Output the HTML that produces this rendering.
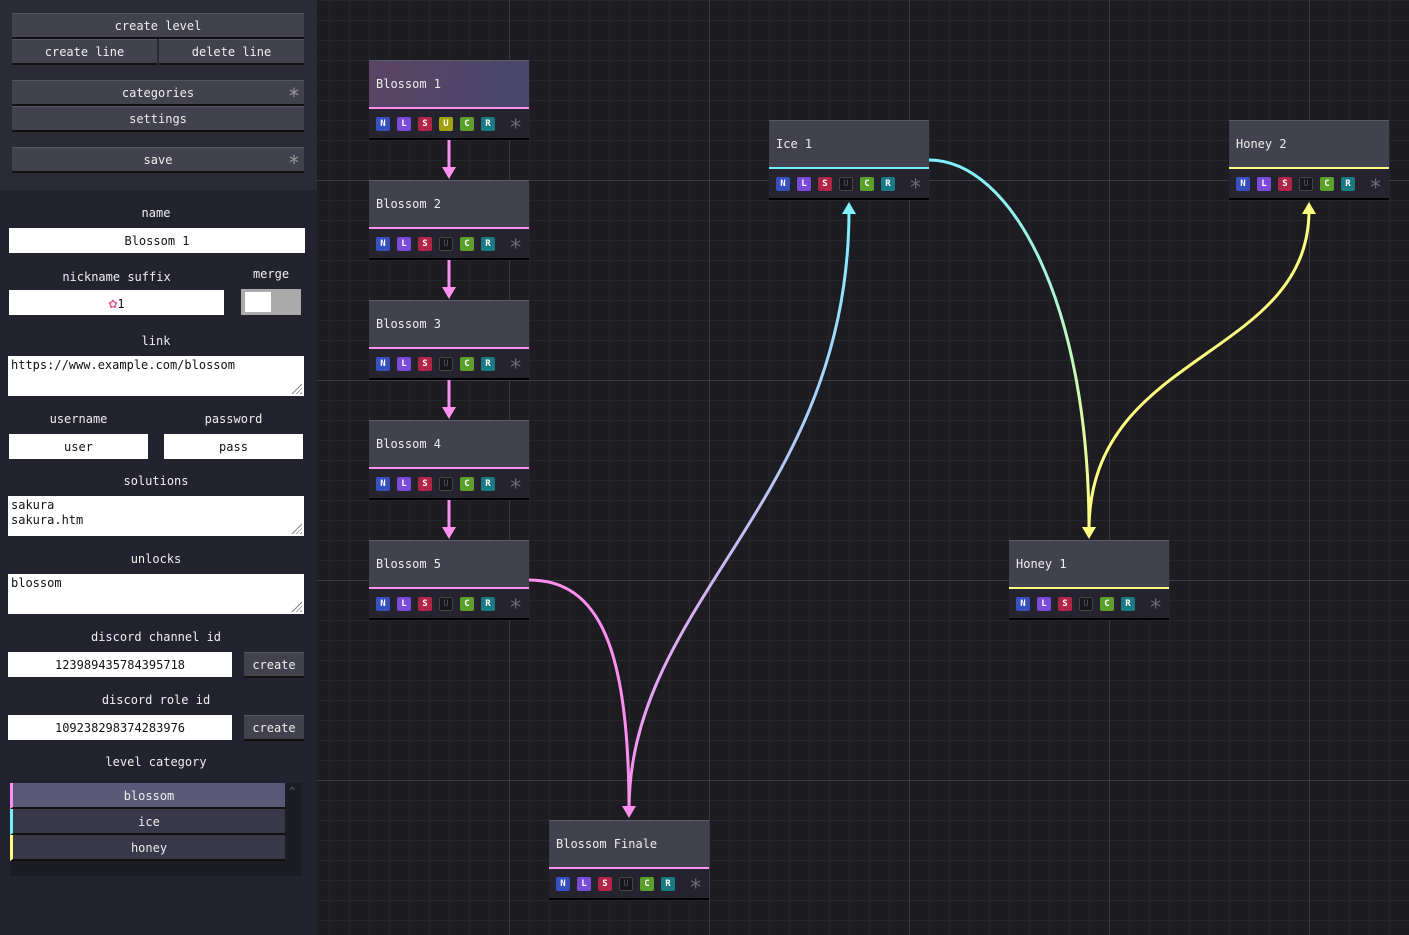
<!DOCTYPE html>
<html><head><meta charset="utf-8"><style>
*{box-sizing:border-box;margin:0;padding:0}
body{width:1409px;height:935px;overflow:hidden;background:#1c1c21;font-family:"DejaVu Sans Mono","Liberation Mono",monospace;font-size:12px;color:#eee;position:relative}
#grid{position:absolute;left:0;top:0;width:1409px;height:935px;
background-image:linear-gradient(90deg,#3a3a42 1px,transparent 1px),linear-gradient(0deg,#3a3a42 1px,transparent 1px),linear-gradient(90deg,#25252b 1px,transparent 1px),linear-gradient(0deg,#25252b 1px,transparent 1px);
background-size:200px 200px,200px 200px,20px 20px,20px 20px;
background-position:109px 0,0 181px,9px 0,0 1px}
#side{position:absolute;left:0;top:0;width:317px;height:935px;background:#232330}
#top{position:absolute;left:0;top:0;width:317px;height:190px;background:#2b2b38}
.btn{position:absolute;background:#42424f;border-top:1px solid #55556a;border-bottom:2px solid #111;color:#eee;text-align:center;font-size:12px;line-height:24px;height:26px}
.ast{position:absolute;right:4px;top:2px;color:#999;font-size:20px;line-height:26px}
.lbl{position:absolute;text-align:center;color:#eee;font-size:12px;margin-top:1px}
.in{position:absolute;background:#fff;color:#111;font-size:12px;text-align:center;line-height:26px;height:25px}
.ta{position:absolute;background:#fff;color:#111;font-size:12px;line-height:15px;padding:2px 3px;height:40px;left:8px;width:296px}
.ta:after{content:"";position:absolute;right:2px;bottom:2px;width:11px;height:11px;background:repeating-linear-gradient(135deg,transparent 0 2px,#888 2px 3px);clip-path:polygon(100% 0,100% 100%,0 100%)}
.cat{position:absolute;left:10px;width:275px;height:26px;background:#383849;border-bottom:2px solid #111;text-align:center;line-height:26px;border-left:3px solid}
.node{position:absolute;width:160px;height:80px}
.hd{height:49px;background:#42424f;border-top:1px solid #5a5a6a;border-bottom:2px solid;padding:16px 7px;font-size:12px;color:#eee}
.ft{height:31px;background:#25242e;border-bottom:2px solid #000;position:relative}
.ft b{position:absolute;top:8px;width:14px;height:14px;font-size:9px;line-height:14px;text-align:center;color:#fff;border-radius:2px;font-weight:bold}
.ft i{position:absolute;left:140px;top:8px;font-style:normal;font-size:22px;color:#6a6a78;line-height:24px}
.n{left:7px;background:#3750c0}.l{left:28px;background:#7a4bd8}.s{left:49px;background:#b02548}.u{left:70px;background:#16151c;border:1px solid #444;color:#555!important;font-weight:normal!important;line-height:12px!important}.uu{left:70px;background:#a0a010}.c{left:91px;background:#5aa02a}.r{left:112px;background:#1a7a84}
</style></head><body>
<div id="grid"></div>
<svg width="1409" height="935" style="position:absolute;left:0;top:0">
<defs>
<linearGradient id="g1" x1="0" y1="1" x2="0" y2="0"><stop offset="0" stop-color="#ff90f0"/><stop offset="1" stop-color="#80f0ff"/></linearGradient>
<linearGradient id="g2" x1="0" y1="0" x2="0" y2="1"><stop offset="0" stop-color="#80f0ff"/><stop offset="1" stop-color="#ffff80"/></linearGradient>
</defs>
<g fill="none" stroke-width="3">
<path d="M449 140V170M449 260V290M449 380V410M449 500V530" stroke="#ff90f0"/>
<path d="M529 580C600 580 629 650 629 810" stroke="#ff90f0"/>
<path d="M629 810C629 600 849 500 849 210" stroke="url(#g1)"/>
<path d="M929 160C1010 160 1089 300 1089 530" stroke="url(#g2)"/>
<path d="M1089 530C1089 350 1309 360 1309 210" stroke="#ffff80"/>
</g>
<g fill="#ff90f0"><path d="M442 167h14l-7 12z"/><path d="M442 287h14l-7 12z"/><path d="M442 407h14l-7 12z"/><path d="M442 527h14l-7 12z"/><path d="M622 806h14l-7 12z"/></g>
<path d="M842 214h14l-7-12z" fill="#80f0ff"/>
<path d="M1082 527h14l-7 12z" fill="#ffff80"/>
<path d="M1302 214h14l-7-12z" fill="#ffff80"/>
</svg>

<div class="node" style="left:369px;top:60px"><div class="hd" style="border-bottom-color:#ff90f0;background:linear-gradient(100deg,#5a4465,#47466a)">Blossom 1</div><div class="ft"><b class="n">N</b><b class="l">L</b><b class="s">S</b><b class="uu">U</b><b class="c">C</b><b class="r">R</b><i>*</i></div></div>
<div class="node" style="left:369px;top:180px"><div class="hd" style="border-bottom-color:#ff90f0">Blossom 2</div><div class="ft"><b class="n">N</b><b class="l">L</b><b class="s">S</b><b class="u">U</b><b class="c">C</b><b class="r">R</b><i>*</i></div></div>
<div class="node" style="left:369px;top:300px"><div class="hd" style="border-bottom-color:#ff90f0">Blossom 3</div><div class="ft"><b class="n">N</b><b class="l">L</b><b class="s">S</b><b class="u">U</b><b class="c">C</b><b class="r">R</b><i>*</i></div></div>
<div class="node" style="left:369px;top:420px"><div class="hd" style="border-bottom-color:#ff90f0">Blossom 4</div><div class="ft"><b class="n">N</b><b class="l">L</b><b class="s">S</b><b class="u">U</b><b class="c">C</b><b class="r">R</b><i>*</i></div></div>
<div class="node" style="left:369px;top:540px"><div class="hd" style="border-bottom-color:#ff90f0">Blossom 5</div><div class="ft"><b class="n">N</b><b class="l">L</b><b class="s">S</b><b class="u">U</b><b class="c">C</b><b class="r">R</b><i>*</i></div></div>
<div class="node" style="left:549px;top:820px"><div class="hd" style="border-bottom-color:#ff90f0">Blossom Finale</div><div class="ft"><b class="n">N</b><b class="l">L</b><b class="s">S</b><b class="u">U</b><b class="c">C</b><b class="r">R</b><i>*</i></div></div>
<div class="node" style="left:769px;top:120px"><div class="hd" style="border-bottom-color:#70f0ff">Ice 1</div><div class="ft"><b class="n">N</b><b class="l">L</b><b class="s">S</b><b class="u">U</b><b class="c">C</b><b class="r">R</b><i>*</i></div></div>
<div class="node" style="left:1229px;top:120px"><div class="hd" style="border-bottom-color:#ffff80">Honey 2</div><div class="ft"><b class="n">N</b><b class="l">L</b><b class="s">S</b><b class="u">U</b><b class="c">C</b><b class="r">R</b><i>*</i></div></div>
<div class="node" style="left:1009px;top:540px"><div class="hd" style="border-bottom-color:#ffff80">Honey 1</div><div class="ft"><b class="n">N</b><b class="l">L</b><b class="s">S</b><b class="u">U</b><b class="c">C</b><b class="r">R</b><i>*</i></div></div>

<div id="side">
<div id="top"></div>
<div class="btn" style="left:12px;top:13px;width:292px">create level</div>
<div class="btn" style="left:12px;top:39px;width:145px">create line</div>
<div class="btn" style="left:159px;top:39px;width:145px">delete line</div>
<div class="btn" style="left:12px;top:80px;width:292px">categories<span class="ast">*</span></div>
<div class="btn" style="left:12px;top:106px;width:292px">settings</div>
<div class="btn" style="left:12px;top:147px;width:292px">save<span class="ast">*</span></div>

<div class="lbl" style="left:8px;width:296px;top:205px">name</div>
<div class="in" style="left:9px;top:228px;width:296px">Blossom 1</div>
<div class="lbl" style="left:9px;width:215px;top:269px">nickname suffix</div>
<div class="lbl" style="left:241px;width:60px;top:266px">merge</div>
<div class="in" style="left:9px;top:290px;width:215px"><span style="color:#e8609a;font-size:15px">✿</span>1</div>
<div style="position:absolute;left:241px;top:289px;width:60px;height:26px;background:#aaa"><div style="position:absolute;left:4px;top:3px;width:26px;height:20px;background:#fff"></div></div>
<div class="lbl" style="left:8px;width:296px;top:333px">link</div>
<div class="ta" style="top:356px">https://www.example.com/blossom</div>
<div class="lbl" style="left:9px;width:139px;top:411px">username</div>
<div class="lbl" style="left:164px;width:139px;top:411px">password</div>
<div class="in" style="left:9px;top:434px;width:139px">user</div>
<div class="in" style="left:164px;top:434px;width:139px">pass</div>
<div class="lbl" style="left:8px;width:296px;top:473px">solutions</div>
<div class="ta" style="top:496px">sakura<br>sakura.htm</div>
<div class="lbl" style="left:8px;width:296px;top:551px">unlocks</div>
<div class="ta" style="top:574px">blossom</div>
<div class="lbl" style="left:8px;width:296px;top:629px">discord channel id</div>
<div class="in" style="left:8px;top:652px;width:224px">123989435784395718</div>
<div class="btn" style="left:244px;top:652px;width:60px;height:26px">create</div>
<div class="lbl" style="left:8px;width:296px;top:692px">discord role id</div>
<div class="in" style="left:8px;top:715px;width:224px">109238298374283976</div>
<div class="btn" style="left:244px;top:715px;width:60px;height:26px">create</div>
<div class="lbl" style="left:8px;width:296px;top:754px">level category</div>
<div style="position:absolute;left:10px;top:783px;width:292px;height:93px;background:#1c1c24"></div>
<div style="position:absolute;left:289px;top:785px;color:#666;font-size:11px">^</div>
<div class="cat" style="top:783px;border-left-color:#ff90f0;background:#5a5a78">blossom</div>
<div class="cat" style="top:809px;border-left-color:#70f0ff">ice</div>
<div class="cat" style="top:835px;border-left-color:#ffff80">honey</div>
</div>
</body></html>
